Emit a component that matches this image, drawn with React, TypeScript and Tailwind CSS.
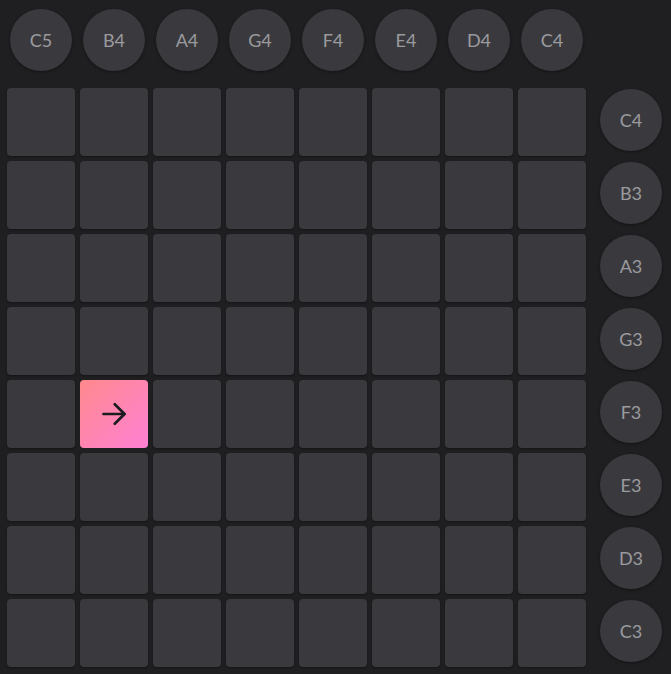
import React from "react";

const top = ["C5", "B4", "A4", "G4", "F4", "E4", "D4", "C4"];
const side = ["C4", "B3", "A3", "G3", "F3", "E3", "D3", "C3"];

function Circle({ label }: { label: string }) {
  return (
    <div className="w-[62px] h-[62px] rounded-full bg-[#3a3a3e] flex items-center justify-center text-[#9b9b9f] text-[18px] shadow-[0_1px_3px_rgba(0,0,0,0.4)]">
      {label}
    </div>
  );
}

export default function App() {
  return (
    <div
      className="w-[671px] h-[674px] bg-[#1f1f21] overflow-hidden"
      style={{ fontFamily: "Lato, 'Noto Sans', sans-serif" }}
    >
      <div className="flex gap-[11px] pl-[10px] pt-[9px]">
        {top.map((t) => (
          <Circle key={t} label={t} />
        ))}
      </div>
      <div className="flex mt-[17px] pl-[7px] gap-[14px]">
        <div className="grid grid-cols-[repeat(8,68px)] auto-rows-[68px] gap-[5px]">
          {Array.from({ length: 64 }).map((_, i) =>
            i === 33 ? (
              <div
                key={i}
                className="rounded-[4px] bg-gradient-to-br from-[#ff888c] to-[#ff80d4] flex items-center justify-center"
              >
                <svg width="36" height="36" viewBox="0 0 24 24" fill="none" stroke="#1c1c1e" strokeWidth="1.8" strokeLinecap="round" strokeLinejoin="round">
                  <path d="M5 12h14" />
                  <path d="M12.5 5.5L19 12l-6.5 6.5" />
                </svg>
              </div>
            ) : (
              <div key={i} className="rounded-[4px] bg-[#3a3a3e] shadow-[0_1px_2px_rgba(0,0,0,0.35)]" />
            )
          )}
        </div>
        <div className="flex flex-col gap-[11px] pt-[1px]">
          {side.map((s) => (
            <Circle key={s} label={s} />
          ))}
        </div>
      </div>
    </div>
  );
}
